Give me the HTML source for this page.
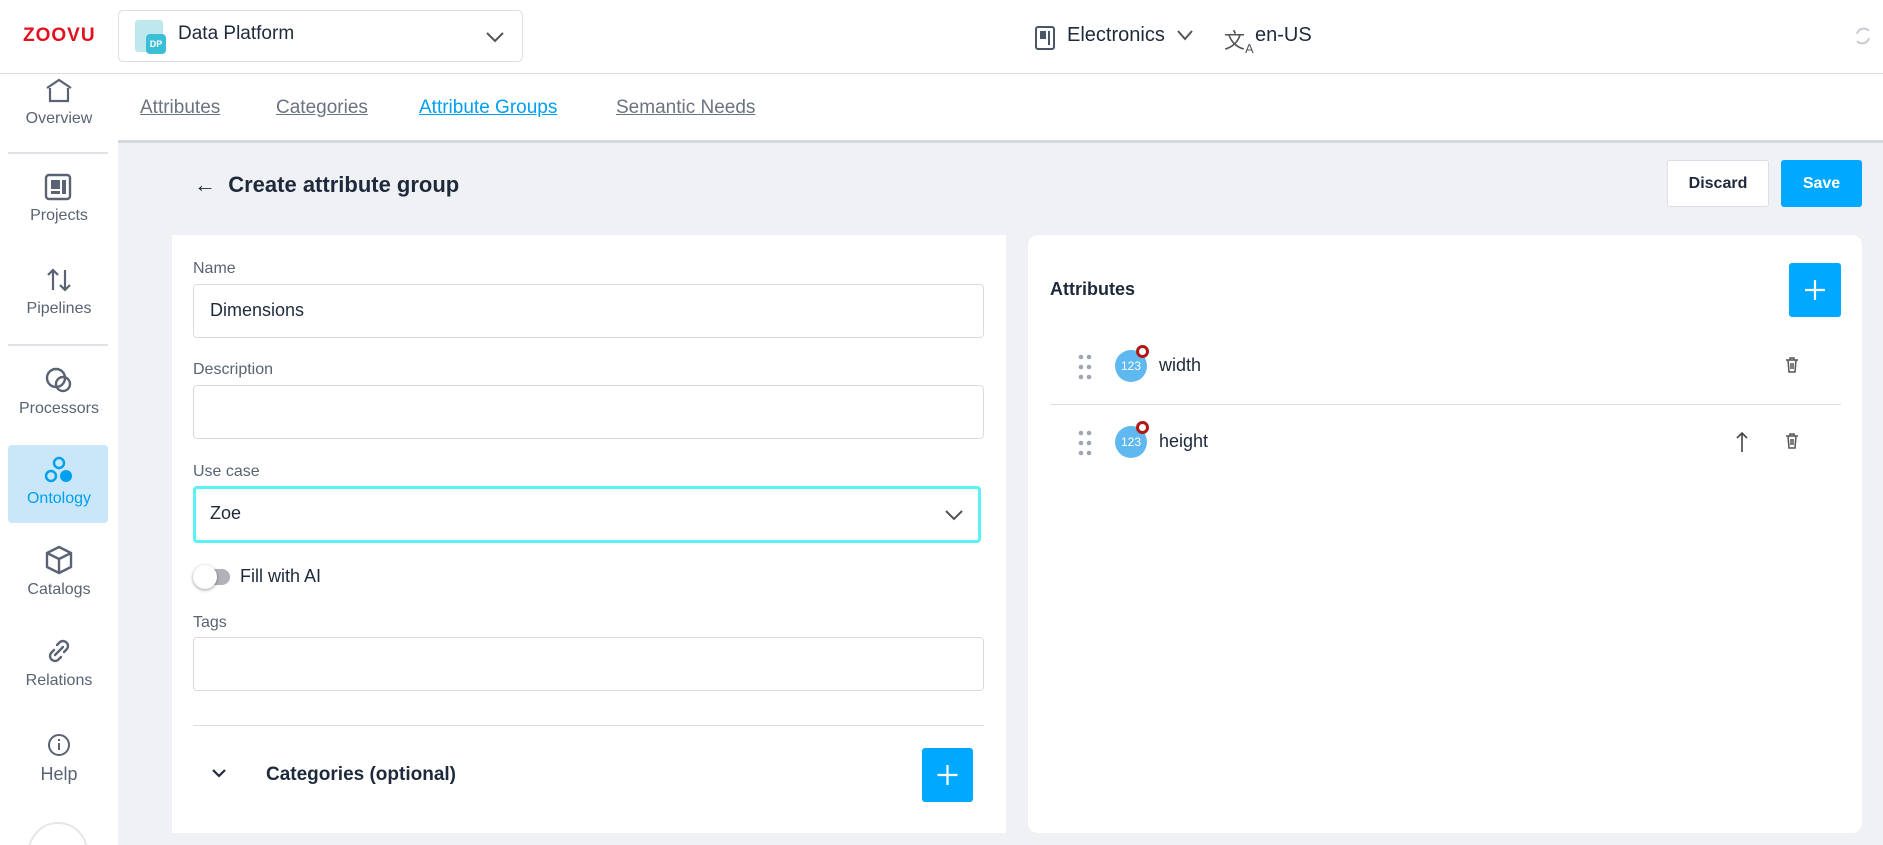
<!DOCTYPE html>
<html style="width:1883px;height:845px;overflow:hidden"><head><meta charset="utf-8"><style>
*{box-sizing:border-box;margin:0;padding:0}
body{width:1883px;height:845px;overflow:hidden;background:#f0f1f5;font-family:"Liberation Sans",sans-serif;color:#1e2a3b;position:relative}
.a{position:absolute}
.hdr{left:0;top:0;width:1883px;height:74px;background:#fff;border-bottom:1px solid #dcdde6}
.side{left:0;top:74px;width:118px;height:771px;background:#fff;overflow:hidden}
.nav{position:absolute;left:0;width:118px;text-align:center;font-size:16px;color:#5a6374}
.nav svg{display:block;margin:0 auto 6px}
.tabs{left:118px;top:74px;width:1765px;height:69px;background:#fff;border-bottom:3px solid #d6d8df}
.tab{position:absolute;top:24px;font-size:19px;color:#6b7280;text-decoration:underline}
.card{background:#fff;border-radius:6px}
.lbl{position:absolute;left:193px;font-size:16px;color:#5a6374}
.inp{position:absolute;left:193px;width:791px;height:54px;border:1px solid #d9dbe3;border-radius:4px;background:#fff;font-size:18px;padding:15px 16px}
.btn{position:absolute;background:#00a8ff;border-radius:3px;color:#fff}
</style></head><body>
<div class="a hdr"></div>
<div class="a" style="left:23px;top:25px;font-size:19px;font-weight:900;color:#e3101e;letter-spacing:1px">ZOOVU</div>
<div class="a" style="left:118px;top:10px;width:405px;height:52px;border:1px solid #dcdde6;border-radius:5px;background:#fff">
 <div class="a" style="left:16px;top:9px;width:28px;height:32px;background:#bfe7ee;border-radius:3px"></div>
 <div class="a" style="left:27px;top:23px;width:20px;height:20px;background:#3bbfd6;border-radius:4px;color:#fff;font-size:9px;font-weight:bold;text-align:center;line-height:20px">DP</div>
 <div class="a" style="left:59px;top:12px;font-size:19px">Data Platform</div>
 <svg class="a" style="left:366px;top:20px" width="20" height="12"><path d="M2 2l8 8 8-8" fill="none" stroke="#555" stroke-width="2"/></svg>
</div>
<svg class="a" style="left:1035px;top:26px" width="20" height="24"><rect x="1" y="1" width="18" height="22" rx="2" fill="none" stroke="#4a5568" stroke-width="2"/><rect x="5" y="5" width="6" height="8" fill="#4a5568"/><rect x="13" y="5" width="2" height="14" fill="#4a5568"/></svg>
<div class="a" style="left:1067px;top:24px;font-size:20px">Electronics</div>
<svg class="a" style="left:1176px;top:29px" width="18" height="12"><path d="M2 2l7 8 7-8" fill="none" stroke="#555" stroke-width="2"/></svg>
<div class="a" style="left:1224px;top:25px;font-size:21px;color:#555">文<sub style="font-size:13px">A</sub></div>
<div class="a" style="left:1255px;top:24px;font-size:20px">en-US</div>
<svg class="a" style="left:1853px;top:25px" width="20" height="22"><path d="M4 9a7 7 0 0 1 12-3M16 13a7 7 0 0 1-12 3" fill="none" stroke="#c8cbd2" stroke-width="2"/></svg>

<div class="a side">
<div class="a" style="left:28px;top:748px;width:60px;height:60px;border-radius:50%;border:2px solid #e4e6ea"></div>
</div>
<div class="nav" style="top:78px"><svg width="28" height="26"><path d="M2 10L14 2l12 8M5 10v13h18V10" fill="none" stroke="#5a6374" stroke-width="2.2"/></svg>Overview</div>
<div class="a" style="left:8px;top:152px;width:100px;height:2px;background:#e0e2e8"></div>
<div class="nav" style="top:173px"><svg width="30" height="28"><rect x="2" y="2" width="24" height="24" rx="3" fill="none" stroke="#5a6374" stroke-width="2.4"/><rect x="7" y="7" width="9" height="9" fill="#5a6374"/><rect x="18" y="7" width="4" height="14" fill="#5a6374"/><rect x="7" y="18" width="9" height="3" fill="#5a6374"/></svg>Projects</div>
<div class="nav" style="top:266px"><svg width="28" height="28"><path d="M8 24V4M3 9l5-5 5 5M20 4v20M15 19l5 5 5-5" fill="none" stroke="#5a6374" stroke-width="2.2"/></svg>Pipelines</div>
<div class="a" style="left:8px;top:344px;width:100px;height:2px;background:#e0e2e8"></div>
<div class="nav" style="top:366px"><svg width="30" height="28"><circle cx="12" cy="12" r="9" fill="none" stroke="#5a6374" stroke-width="2.4"/><circle cx="19" cy="18" r="7" fill="none" stroke="#5a6374" stroke-width="2.4"/></svg>Processors</div>
<div class="a" style="left:8px;top:445px;width:100px;height:78px;background:#c9e7f8;border-radius:4px"></div>
<div class="nav" style="top:456px;color:#00a0f0"><svg width="30" height="28"><circle cx="15" cy="7" r="5" fill="none" stroke="#00a0f0" stroke-width="2.4"/><circle cx="7" cy="20" r="5" fill="none" stroke="#00a0f0" stroke-width="2.4"/><circle cx="22" cy="20" r="6" fill="#00a0f0"/></svg>Ontology</div>
<div class="nav" style="top:545px"><svg width="30" height="30"><path d="M15 2l12 6v14l-12 6-12-6V8zM3 8l12 6 12-6M15 14v14" fill="none" stroke="#5a6374" stroke-width="2.4" stroke-linejoin="round"/></svg>Catalogs</div>
<div class="nav" style="top:636px"><svg width="30" height="30"><path d="M13 9l3-3a5 5 0 0 1 7 7l-3 3M17 21l-3 3a5 5 0 0 1-7-7l3-3M11 19l8-8" fill="none" stroke="#5a6374" stroke-width="2.4" stroke-linecap="round"/></svg>Relations</div>
<div class="nav" style="top:732px;font-size:18px"><svg width="26" height="26"><circle cx="13" cy="13" r="10" fill="none" stroke="#5a6374" stroke-width="2"/><path d="M13 11v7M13 7v2" stroke="#5a6374" stroke-width="2"/></svg>Help</div>

<div class="a tabs"></div>
<div class="tab" style="left:140px;top:97px">Attributes</div>
<div class="tab" style="left:276px;top:97px">Categories</div>
<div class="tab" style="left:419px;top:97px;color:#00a0f0">Attribute Groups</div>
<div class="tab" style="left:616px;top:97px">Semantic Needs</div>

<div class="a" style="left:194px;top:172px;font-size:22px;font-weight:bold">←&nbsp; Create attribute group</div>
<div class="a" style="left:1667px;top:160px;width:102px;height:47px;background:#fff;border:1px solid #dcdde6;border-radius:3px;font-size:16px;font-weight:bold;text-align:center;line-height:45px">Discard</div>
<div class="btn" style="left:1781px;top:160px;width:81px;height:47px;font-size:16px;font-weight:bold;text-align:center;line-height:47px">Save</div>

<div class="a card" style="left:172px;top:235px;width:834px;height:598px;border-radius:0"></div>
<div class="lbl" style="top:260px">Name</div>
<div class="inp" style="top:284px">Dimensions</div>
<div class="lbl" style="top:361px">Description</div>
<div class="inp" style="top:385px"></div>
<div class="lbl" style="top:463px">Use case</div>
<div class="inp" style="top:486px;width:788px;height:57px;border:3px solid #5af2f6;padding:14px 14px">Zoe
 <svg class="a" style="left:748px;top:20px" width="20" height="12"><path d="M2 2l8 8 8-8" fill="none" stroke="#555" stroke-width="2"/></svg></div>
<div class="a" style="left:196px;top:569px;width:34px;height:16px;border-radius:8px;background:#b0b2b8"></div>
<div class="a" style="left:193px;top:565px;width:24px;height:24px;border-radius:50%;background:#fff;box-shadow:0 1px 3px rgba(0,0,0,.4)"></div>
<div class="a" style="left:240px;top:566px;font-size:18px">Fill with AI</div>
<div class="lbl" style="top:614px">Tags</div>
<div class="inp" style="top:637px"></div>
<div class="a" style="left:193px;top:725px;width:791px;height:1px;background:#dcdde6"></div>
<svg class="a" style="left:211px;top:768px" width="16" height="10"><path d="M2 2l6 6 6-6" fill="none" stroke="#1e2a3b" stroke-width="2.2"/></svg>
<div class="a" style="left:266px;top:764px;font-size:19px;font-weight:bold">Categories (optional)</div>
<div class="btn" style="left:922px;top:748px;width:51px;height:54px"><svg width="51" height="54"><path d="M25.5 17v20M15.5 27h20" stroke="#fff" stroke-width="2.2"/></svg></div>

<div class="a card" style="left:1028px;top:235px;width:834px;height:598px;border-radius:10px"></div>
<div class="a" style="left:1050px;top:279px;font-size:18px;font-weight:bold">Attributes</div>
<div class="btn" style="left:1789px;top:263px;width:52px;height:54px"><svg width="52" height="54"><path d="M26 17v20M16 27h20" stroke="#fff" stroke-width="2.2"/></svg></div>
<div class="a" style="left:1050px;top:404px;width:791px;height:1px;background:#dcdde6"></div>

<svg class="a" style="left:1078px;top:354px" width="14" height="26"><g fill="#a0a6b4"><circle cx="3" cy="3" r="2.3"/><circle cx="11" cy="3" r="2.3"/><circle cx="3" cy="13" r="2.3"/><circle cx="11" cy="13" r="2.3"/><circle cx="3" cy="23" r="2.3"/><circle cx="11" cy="23" r="2.3"/></g></svg>
<div class="a" style="left:1115px;top:350px;width:32px;height:32px;border-radius:50%;background:#5fb8f0;color:#fff;font-size:12px;text-align:center;line-height:32px">123</div>
<div class="a" style="left:1136px;top:345px;width:13px;height:13px;border-radius:50%;border:3px solid #b01818;background:#fff"></div>
<div class="a" style="left:1159px;top:355px;font-size:18px">width</div>
<svg class="a" style="left:1784px;top:356px" width="16" height="18"><path d="M2 4h12M6 4V2h4v2M4 4l1 12h6l1-12M7 7v6M9 7v6" fill="none" stroke="#555" stroke-width="1.5"/></svg>

<svg class="a" style="left:1078px;top:430px" width="14" height="26"><g fill="#a0a6b4"><circle cx="3" cy="3" r="2.3"/><circle cx="11" cy="3" r="2.3"/><circle cx="3" cy="13" r="2.3"/><circle cx="11" cy="13" r="2.3"/><circle cx="3" cy="23" r="2.3"/><circle cx="11" cy="23" r="2.3"/></g></svg>
<div class="a" style="left:1115px;top:426px;width:32px;height:32px;border-radius:50%;background:#5fb8f0;color:#fff;font-size:12px;text-align:center;line-height:32px">123</div>
<div class="a" style="left:1136px;top:421px;width:13px;height:13px;border-radius:50%;border:3px solid #b01818;background:#fff"></div>
<div class="a" style="left:1159px;top:431px;font-size:18px">height</div>
<svg class="a" style="left:1735px;top:431px" width="14" height="22"><path d="M7 21V2M2 7l5-5 5 5" fill="none" stroke="#444" stroke-width="1.6"/></svg>
<svg class="a" style="left:1784px;top:432px" width="16" height="18"><path d="M2 4h12M6 4V2h4v2M4 4l1 12h6l1-12M7 7v6M9 7v6" fill="none" stroke="#555" stroke-width="1.5"/></svg>
</body></html>
